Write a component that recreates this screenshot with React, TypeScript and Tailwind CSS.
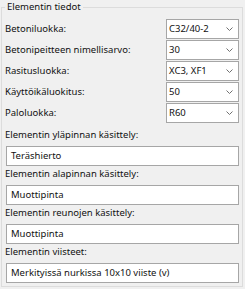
const combos = [
  { label: "Betoniluokka:", value: "C32/40-2" },
  { label: "Betonipeitteen nimellisarvo:", value: "30" },
  { label: "Rasitusluokka:", value: "XC3, XF1" },
  { label: "Käyttöikäluokitus:", value: "50" },
  { label: "Paloluokka:", value: "R60" },
];

const fields = [
  { label: "Elementin yläpinnan käsittely:", value: "Teräshierto" },
  { label: "Elementin alapinnan käsittely:", value: "Muottipinta" },
  { label: "Elementin reunojen käsittely:", value: "Muottipinta" },
  { label: "Elementin viisteet:", value: "Merkityissä nurkissa 10x10 viiste (v)" },
];

function Chevron() {
  return (
    <svg width="7" height="4" viewBox="0 0 7 4" className="shrink-0">
      <path d="M0.5 0.5 L3.5 3.5 L6.5 0.5" fill="none" stroke="#707070" strokeWidth="1" />
    </svg>
  );
}

export default function App() {
  return (
    <div
      className="w-[245px] h-[289px] bg-[#f0f0f0] text-[#111] text-[9.5px]"
      style={{ fontFamily: '"Noto Sans", "Liberation Sans", sans-serif' }}
    >
      <fieldset className="ml-[1px] w-[242px] border border-[#dcdcdc] px-[3px] pt-[5px] pb-[3px]">
        <legend className="px-[2px] leading-[14px]">Elementin tiedot</legend>

        {/* Dropdown rows */}
        <div className="flex flex-col gap-[1px]">
          {combos.map((c) => (
            <div key={c.label} className="flex items-center justify-between h-[20px]">
              <span>{c.label}</span>
              <div className="w-[73px] h-[20px] bg-white border border-[#a6a6a6] flex items-center justify-between pl-[2px] pr-[5px]">
                <span>{c.value}</span>
                <Chevron />
              </div>
            </div>
          ))}
        </div>

        {/* Text fields */}
        <div className="flex flex-col pt-[4px]">
          {fields.map((f) => (
            <div key={f.label} className="flex flex-col">
              <div className="leading-[16px] h-[16px] mb-[3px]">{f.label}</div>
              <div className="ml-[1px] h-[20px] bg-white border border-[#a6a6a6] flex items-center pl-[4px]">
                {f.value}
              </div>
            </div>
          ))}
        </div>
      </fieldset>
    </div>
  );
}
